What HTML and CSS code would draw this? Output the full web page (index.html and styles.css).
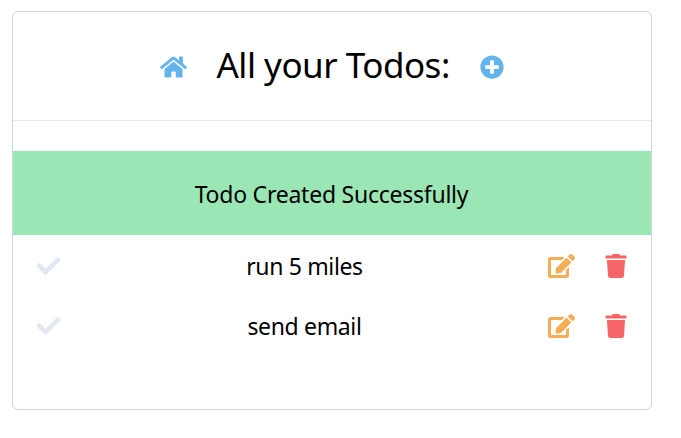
FILE: index.html
```html
<!DOCTYPE html>
<html lang="en">
<head>
<meta charset="utf-8">
<title>All your Todos</title>
<link rel="stylesheet" href="styles.css">
</head>
<body>
<svg class="sprite" aria-hidden="true">
  <symbol id="home" viewBox="0 0 576 512"><path d="M280.37 148.26L96 300.11V464a16 16 0 0 0 16 16l112.06-.29a16 16 0 0 0 15.92-16V368a16 16 0 0 1 16-16h64a16 16 0 0 1 16 16v95.64a16 16 0 0 0 16 16.05L464 480a16 16 0 0 0 16-16V300L295.67 148.26a12.19 12.19 0 0 0-15.3 0zM571.6 251.47L488 182.56V44.05a12 12 0 0 0-12-12h-56a12 12 0 0 0-12 12v72.61L318.47 43a48 48 0 0 0-61 0L4.34 251.47a12 12 0 0 0-1.6 16.9l25.5 31A12 12 0 0 0 45.15 301l235.22-193.74a12.19 12.19 0 0 1 15.3 0L530.9 301a12 12 0 0 0 16.9-1.6l25.5-31a12 12 0 0 0-1.7-16.93z"/></symbol>
  <symbol id="plus" viewBox="0 0 512 512"><path d="M256 8C119 8 8 119 8 256s111 248 248 248 248-111 248-248S393 8 256 8zm144 276c0 6.6-5.4 12-12 12h-92v92c0 6.6-5.4 12-12 12h-56c-6.6 0-12-5.4-12-12v-92h-92c-6.6 0-12-5.4-12-12v-56c0-6.6 5.4-12 12-12h92v-92c0-6.6 5.4-12 12-12h56c6.6 0 12 5.4 12 12v92h92c6.6 0 12 5.4 12 12v56z"/></symbol>
  <symbol id="check" viewBox="0 0 512 512"><path d="M173.898 439.404l-166.4-166.4c-9.997-9.997-9.997-26.206 0-36.204l36.203-36.204c9.997-9.998 26.207-9.998 36.204 0L192 312.69 432.095 72.596c9.997-9.997 26.207-9.997 36.204 0l36.203 36.204c9.997 9.997 9.997 26.206 0 36.204l-294.4 294.401c-9.998 9.997-26.207 9.997-36.204-.001z"/></symbol>
  <symbol id="edit" viewBox="0 0 576 512"><path d="M402.6 83.2l90.2 90.2c3.8 3.8 3.8 10 0 13.8L274.4 405.6l-92.8 10.3c-12.4 1.4-22.9-9.1-21.5-21.5l10.3-92.8L388.8 83.2c3.8-3.8 10-3.8 13.8 0zm162-22.9l-48.8-48.8c-15.2-15.2-39.9-15.2-55.2 0l-35.4 35.4c-3.8 3.8-3.8 10 0 13.8l90.2 90.2c3.8 3.8 10 3.8 13.8 0l35.4-35.4c15.2-15.3 15.2-40 0-55.2zM384 346.2V448H64V128h229.8c3.2 0 6.2-1.3 8.5-3.5l40-40c7.6-7.6 2.2-20.5-8.5-20.5H48C21.5 64 0 85.5 0 112v352c0 26.5 21.5 48 48 48h352c26.5 0 48-21.5 48-48V306.2c0-10.7-12.9-16-20.5-8.5l-40 40c-2.2 2.3-3.5 5.3-3.5 8.5z"/></symbol>
  <symbol id="trash" viewBox="0 0 448 512"><path d="M432 32H312l-9.4-18.7A24 24 0 0 0 281.1 0H166.8a23.72 23.72 0 0 0-21.4 13.3L136 32H16A16 16 0 0 0 0 48v32a16 16 0 0 0 16 16h416a16 16 0 0 0 16-16V48a16 16 0 0 0-16-16zM53.2 467a48 48 0 0 0 47.9 45h245.8a48 48 0 0 0 47.9-45L416 128H32z"/></symbol>
</svg>
<main class="card">
  <header class="header">
    <a class="link"><svg class="icon wide"><use href="#home"/></svg></a>
    <h1 class="title">All your Todos:</h1>
    <a class="link"><svg class="icon"><use href="#plus"/></svg></a>
  </header>
  <div class="alert">Todo Created Successfully</div>
  <ul class="list">
    <li class="item">
      <svg class="icon done"><use href="#check"/></svg>
      <p class="name">run 5 miles</p>
      <div class="actions"><svg class="icon wide edit"><use href="#edit"/></svg><svg class="icon narrow trash"><use href="#trash"/></svg></div>
    </li>
    <li class="item">
      <svg class="icon done"><use href="#check"/></svg>
      <p class="name">send email</p>
      <div class="actions"><svg class="icon wide edit"><use href="#edit"/></svg><svg class="icon narrow trash"><use href="#trash"/></svg></div>
    </li>
  </ul>
</main>
</body>
</html>
```
FILE: styles.css
```css
* { box-sizing: border-box; margin: 0; padding: 0; }
body { background: #fff; color: #000; font-family: "Segoe UI", "Noto Sans", "Open Sans", sans-serif; }
.sprite { display: none; }
.card { width: 640px; height: 399px; margin: 11px 0 0 12px; border: 1px solid #cbd5e0; border-radius: 6px; }
.header { display: flex; align-items: center; justify-content: center; gap: 30px; height: 109px; padding-right: 1px; border-bottom: 1px solid #e2e8f0; }
.link { display: flex; padding-top: 2px; color: #63b3ed; }
.title { width: 233px; padding-bottom: 2px; font-size: 35px; font-weight: 400; line-height: 54px; white-space: nowrap; letter-spacing: -0.5px; }
.icon { width: 24px; height: 24px; fill: currentColor; flex: none; }
.wide { width: 27px; }
.narrow { width: 22px; }
.alert { height: 84px; margin-top: 30px; padding: 1px 1px 0 0; background: #9ae6b4; font-size: 23px; line-height: 84px; text-align: center; letter-spacing: -0.24px; }
.list { list-style: none; }
.item { display: flex; align-items: center; justify-content: space-between; height: 60px; padding: 2px 24px 0; }
.done { width: 25px; margin-left: -1px; color: #e2e8f0; }
.name { font-size: 23px; line-height: 36px; letter-spacing: -0.35px; white-space: nowrap; }
.actions { display: flex; gap: 30px; }
.edit { color: #f6ad55; }
.trash { color: #f56565; }
```
